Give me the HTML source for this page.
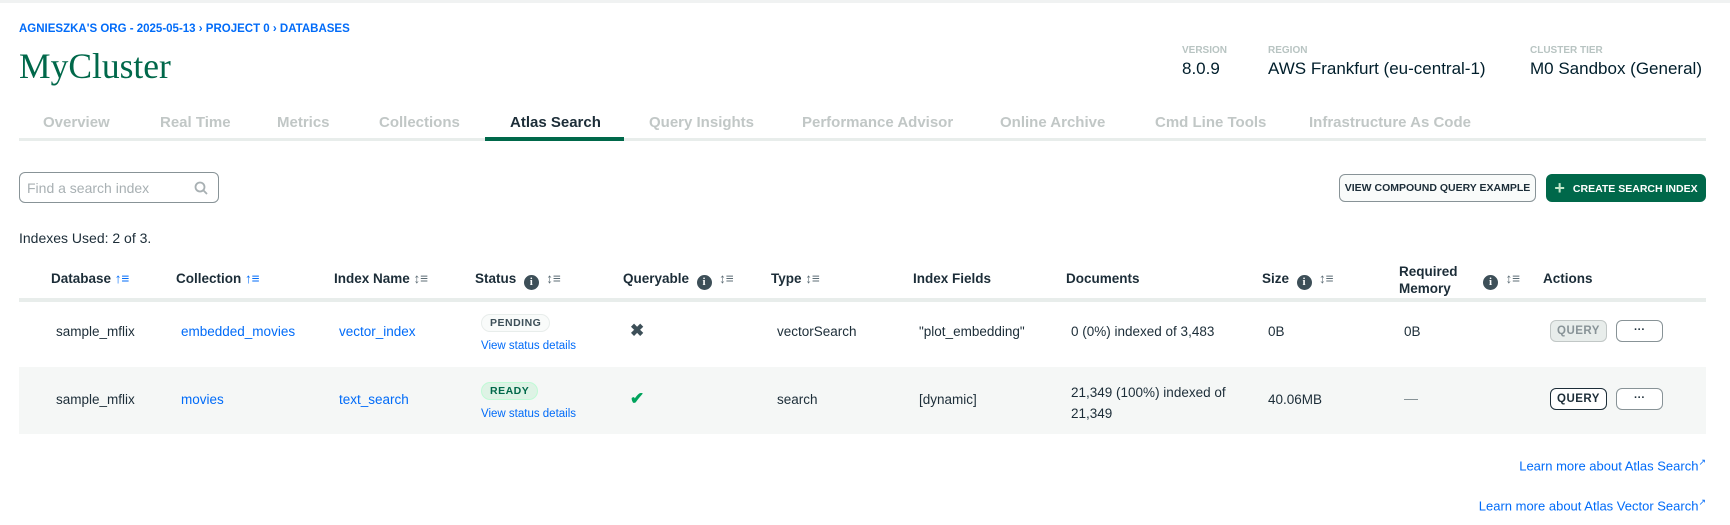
<!DOCTYPE html>
<html><head><meta charset="utf-8"><style>
*{margin:0;padding:0;box-sizing:border-box}
body{width:1730px;height:525px;background:#fff;font-family:"Liberation Sans",sans-serif;color:#001e2b;position:relative;overflow:hidden}
.a{position:absolute;white-space:nowrap}
.bc{left:19px;top:23px;font-size:11.5px;font-weight:bold;color:#016bf8}
.title{left:19px;top:45px;font-family:"Liberation Serif",serif;font-size:35.5px;color:#00684a}
.lbl{font-size:10px;font-weight:bold;color:#b8c4c2;top:45px}
.val{font-size:17px;color:#001e2b;top:59px}
.tab{top:114px;font-size:15px;font-weight:bold;color:#c1c7c6}
.th{font-size:13.5px;font-weight:bold;color:#1c2d38}
.td{font-size:13.5px;color:#1c2d38}
.lnk{color:#016bf8}
.badge{font-size:10.5px;font-weight:bold;border-radius:10px;padding:2px 8px;letter-spacing:.5px}
.btn{border:1px solid #889397;border-radius:6px;font-size:11px;font-weight:bold;text-align:center}
.ic{display:inline-block;width:15px;height:15px;border-radius:50%;background:#3d4f58;color:#fff;font-size:11px;text-align:center;line-height:15px;font-weight:bold;font-family:"Liberation Serif",serif;vertical-align:-2px}
</style></head><body>
<div class="a" style="left:0;top:0;width:1730px;height:3px;background:#f0f2f2"></div>
<div class="a bc">AGNIESZKA'S ORG - 2025-05-13 › PROJECT 0 › DATABASES</div>
<div class="a title">MyCluster</div>
<div class="a lbl" style="left:1182px">VERSION</div><div class="a val" style="left:1182px">8.0.9</div>
<div class="a lbl" style="left:1268px">REGION</div><div class="a val" style="left:1268px">AWS Frankfurt (eu-central-1)</div>
<div class="a lbl" style="left:1530px">CLUSTER TIER</div><div class="a val" style="left:1530px">M0 Sandbox (General)</div>

<div class="a tab" style="left:43px">Overview</div>
<div class="a tab" style="left:160px">Real Time</div>
<div class="a tab" style="left:277px">Metrics</div>
<div class="a tab" style="left:379px">Collections</div>
<div class="a tab" style="left:510px;color:#1c2d38">Atlas Search</div>
<div class="a tab" style="left:649px">Query Insights</div>
<div class="a tab" style="left:802px">Performance Advisor</div>
<div class="a tab" style="left:1000px">Online Archive</div>
<div class="a tab" style="left:1155px">Cmd Line Tools</div>
<div class="a tab" style="left:1309px">Infrastructure As Code</div>
<div class="a" style="left:19px;top:138px;width:1687px;height:3px;background:#e8edeb"></div>
<div class="a" style="left:485px;top:137px;width:139px;height:4px;background:#00684a"></div>

<div class="a" style="left:19px;top:172px;width:200px;height:31px;border:1px solid #889397;border-radius:6px"></div>
<div class="a" style="left:27px;top:180px;font-size:14px;color:#a8b0b3">Find a search index</div>
<svg class="a" style="left:194px;top:181px" width="14" height="14" viewBox="0 0 14 14"><circle cx="6" cy="6" r="4.5" fill="none" stroke="#a8b0b3" stroke-width="1.8"/><path d="M9.3 9.3 13 13" stroke="#a8b0b3" stroke-width="1.8"/></svg>

<div class="a btn" style="left:1339px;top:174px;width:197px;height:28px;line-height:26px;background:#f9fbfa;color:#1c2d38;font-size:10.5px">VIEW COMPOUND QUERY EXAMPLE</div>
<div class="a btn" style="left:1546px;top:174px;width:160px;height:28px;line-height:26px;background:#00684a;border-color:#00684a;color:#fff;font-size:10.5px"><span style="font-size:18px;vertical-align:-2px;color:#c3e7ca;margin-right:8px">+</span>CREATE SEARCH INDEX</div>

<div class="a" style="left:19px;top:230px;font-size:14px;color:#1c2d38">Indexes Used: 2 of 3.</div>

<div class="a th" style="left:51px;top:271px">Database <span style="color:#016bf8">↑≡</span></div>
<div class="a th" style="left:176px;top:271px">Collection <span style="color:#016bf8">↑≡</span></div>
<div class="a th" style="left:334px;top:271px">Index Name <span style="color:#5c6c75">↕≡</span></div>
<div class="a th" style="left:475px;top:271px">Status &nbsp;<span class="ic">i</span> &nbsp;<span style="color:#5c6c75">↕≡</span></div>
<div class="a th" style="left:623px;top:271px">Queryable &nbsp;<span class="ic">i</span> &nbsp;<span style="color:#5c6c75">↕≡</span></div>
<div class="a th" style="left:771px;top:271px">Type <span style="color:#5c6c75">↕≡</span></div>
<div class="a th" style="left:913px;top:271px">Index Fields</div>
<div class="a th" style="left:1066px;top:271px">Documents</div>
<div class="a th" style="left:1262px;top:271px">Size &nbsp;<span class="ic">i</span> &nbsp;<span style="color:#5c6c75">↕≡</span></div>
<div class="a th" style="left:1399px;top:263px;line-height:17px">Required<br>Memory</div>
<div class="a th" style="left:1483px;top:271px"><span class="ic">i</span> &nbsp;<span style="color:#5c6c75">↕≡</span></div>
<div class="a th" style="left:1543px;top:271px">Actions</div>
<div class="a" style="left:19px;top:298px;width:1687px;height:4px;background:#e8edeb"></div>

<div class="a" style="left:19px;top:367px;width:1687px;height:67px;background:#f5f7f6"></div>

<div class="a td" style="left:56px;top:324px">sample_mflix</div>
<div class="a td lnk" style="left:181px;top:324px">embedded_movies</div>
<div class="a td lnk" style="left:339px;top:324px">vector_index</div>
<div class="a badge" style="left:481px;top:314px;background:#f9fbfa;border:1px solid #e8edeb;color:#3d4f58">PENDING</div>
<div class="a lnk" style="left:481px;top:340px;font-size:11.5px">View status details</div>
<div class="a" style="left:630px;top:321px;font-size:17px;font-weight:bold;color:#3d4f58">✖</div>
<div class="a td" style="left:777px;top:324px">vectorSearch</div>
<div class="a td" style="left:919px;top:324px">"plot_embedding"</div>
<div class="a td" style="left:1071px;top:324px">0 (0%) indexed of 3,483</div>
<div class="a td" style="left:1268px;top:324px">0B</div>
<div class="a td" style="left:1404px;top:324px">0B</div>
<div class="a btn" style="left:1550px;top:320px;width:57px;height:22px;line-height:20px;background:#e8edeb;border-color:#c1c7c6;color:#889397;font-size:11.5px;letter-spacing:.5px">QUERY</div>
<div class="a btn" style="left:1616px;top:320px;width:47px;height:22px;line-height:18px;background:#fff;color:#1c2d38">···</div>

<div class="a td" style="left:56px;top:392px">sample_mflix</div>
<div class="a td lnk" style="left:181px;top:392px">movies</div>
<div class="a td lnk" style="left:339px;top:392px">text_search</div>
<div class="a badge" style="left:481px;top:382px;border:1px solid #c0fad6;background:#def3e5;color:#00684a">READY</div>
<div class="a lnk" style="left:481px;top:408px;font-size:11.5px">View status details</div>
<div class="a" style="left:630px;top:389px;font-size:17px;font-weight:bold;color:#00a35c">✔</div>
<div class="a td" style="left:777px;top:392px">search</div>
<div class="a td" style="left:919px;top:392px">[dynamic]</div>
<div class="a td" style="left:1071px;top:382px;line-height:21px">21,349 (100%) indexed of<br>21,349</div>
<div class="a td" style="left:1268px;top:392px">40.06MB</div>
<div class="a" style="left:1404px;top:399px;width:14px;height:1px;background:#889397"></div>
<div class="a btn" style="left:1550px;top:388px;width:57px;height:22px;line-height:20px;background:#fff;border-color:#1c2d38;color:#1c2d38;font-size:11.5px;letter-spacing:.5px">QUERY</div>
<div class="a btn" style="left:1616px;top:388px;width:47px;height:22px;line-height:18px;background:#fff;color:#1c2d38">···</div>

<div class="a lnk" style="right:24px;top:457px;font-size:13px">Learn more about Atlas Search<sup style="font-size:9px">↗</sup></div>
<div class="a lnk" style="right:24px;top:497px;font-size:13px">Learn more about Atlas Vector Search<sup style="font-size:9px">↗</sup></div>
</body></html>
